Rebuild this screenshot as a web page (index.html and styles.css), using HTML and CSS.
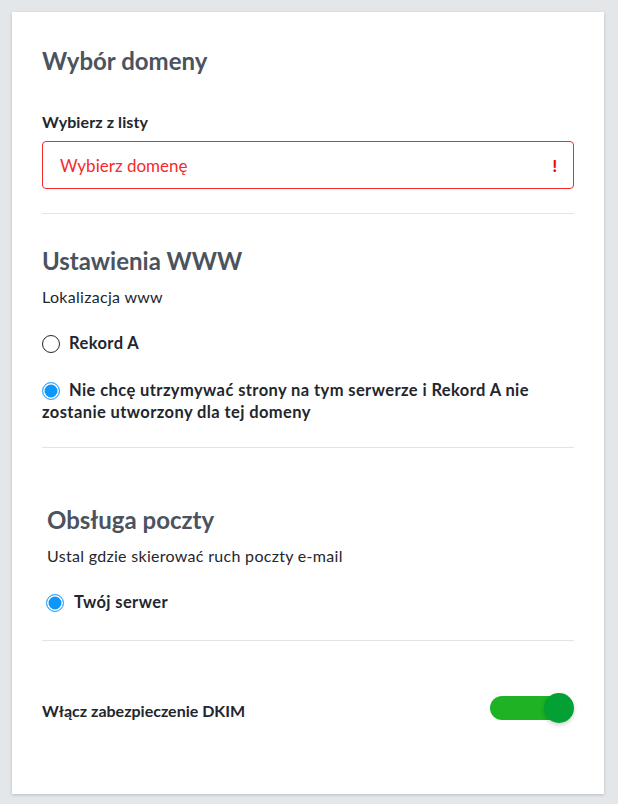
FILE: index.html
```html
<!DOCTYPE html>
<html lang="pl">
<head>
    <meta charset="UTF-8">
    <meta name="viewport" content="width=device-width, initial-scale=1.0">
    <title>Ustawienia domeny</title>
    <link rel="stylesheet" href="styles.css">
</head>
<body>
    <div class="card">
        <section class="section">
            <h2 class="title">Wybór domeny</h2>
            <label class="field-label" for="domain">Wybierz z listy</label>
            <div class="select error" id="domain">
                <span>Wybierz domenę</span>
                <span class="mark">!</span>
            </div>
        </section>

        <section class="section">
            <h2 class="title">Ustawienia WWW</h2>
            <p class="hint">Lokalizacja www</p>
            <div class="option"><span class="radio"></span>Rekord A</div>
            <div class="option"><span class="radio checked"></span>Nie chcę utrzymywać strony na tym serwerze i Rekord A nie zostanie utworzony dla tej domeny</div>
        </section>

        <section class="section mail">
            <h2 class="title">Obsługa poczty</h2>
            <p class="hint">Ustal gdzie skierować ruch poczty e-mail</p>
            <div class="option"><span class="radio checked"></span>Twój serwer</div>
        </section>

        <div class="switch-row">
            <span class="switch-label">Włącz zabezpieczenie DKIM</span>
            <span class="switch on"><span class="knob"></span></span>
        </div>
    </div>
</body>
</html>
```

FILE: styles.css
```css
body {
    margin: 0;
    padding: 12px 14px 12px 12px;
    background: #e4e7ea;
    font-family: Lato, "Noto Sans", sans-serif;
    color: #23262d;
}
.card {
    background: white;
    padding: 34px 30px 71px;
    box-shadow: 0 1px 3px rgba(0, 0, 0, 0.18);
}
.section {
    border-bottom: 1px solid #e1e5ea;
}
.section + .section {
    padding-top: 32px;
}
.title {
    margin: 0;
    font-size: 24px;
    line-height: 30px;
    font-weight: 700;
    color: #4b535e;
}
.field-label {
    display: block;
    margin-top: 36px;
    font-size: 16px;
    line-height: 20px;
    font-weight: 700;
    letter-spacing: 0.1px;
}
.select {
    display: flex;
    justify-content: space-between;
    align-items: center;
    height: 48px;
    box-sizing: border-box;
    margin: 9px 0 24px;
    padding: 0 16px 0 17px;
    border: 1px solid #ddd;
    border-radius: 4px;
    font-size: 17px;
}
.select.error {
    border-color: #f52a2a;
    color: #f52a2a;
}
.mark {
    font-weight: 900;
    font-size: 16px;
    color: #f00;
}
.hint {
    margin: 11px 0 0;
    font-size: 16px;
    line-height: 20px;
    letter-spacing: 0.3px;
}
.option {
    margin-top: 25px;
    font-size: 16.5px;
    line-height: 22px;
    font-weight: 700;
    letter-spacing: 0.4px;
}
.option:last-child {
    margin-bottom: 24px;
}
.radio {
    display: inline-block;
    vertical-align: -4px;
    width: 18px;
    height: 18px;
    box-sizing: border-box;
    margin-right: 9px;
    border: 1.5px solid #23262d;
    border-radius: 50%;
}
.radio.checked {
    border-color: #3aa8fc;
    background: #0d97fb;
    box-shadow: inset 0 0 0 1.5px white;
}
.section.mail {
    padding: 57px 0 0 5px;
    border-bottom: none;
}
.mail::after {
    content: "";
    display: block;
    height: 1px;
    margin-left: -5px;
    background: #e1e5ea;
}
.mail .option:last-child {
    margin-bottom: 27px;
}
.mail .radio {
    margin-left: -1px;
    margin-right: 10px;
}
.switch-row {
    display: flex;
    justify-content: space-between;
    align-items: center;
    margin-top: 52px;
}
.switch-label {
    font-size: 16px;
    font-weight: 700;
    padding-top: 5px;
}
.switch {
    position: relative;
    width: 84px;
    height: 30px;
}
.switch::before {
    content: "";
    position: absolute;
    left: 0;
    right: 13px;
    top: 3px;
    height: 24px;
    border-radius: 12px;
    background: #1eb224;
}
.knob {
    position: absolute;
    right: 0;
    top: 0;
    width: 30px;
    height: 30px;
    border-radius: 50%;
    background: #03a134;
    box-shadow: 0 2px 4px rgba(0, 0, 0, 0.2);
}
```
